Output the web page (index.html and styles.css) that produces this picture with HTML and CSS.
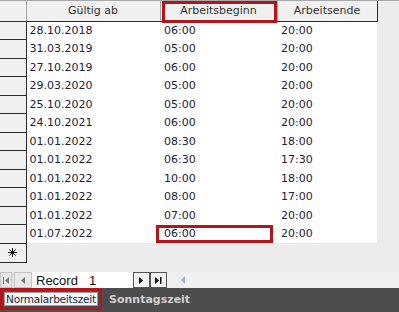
FILE: index.html
```html
<!DOCTYPE html>
<html lang="de">
  <head>
    <meta charset="UTF-8" />
    <title>Arbeitszeiten</title>
    <link rel="stylesheet" href="styles.css">
  </head>
  <body>
    <div class="sheet">
      <table class="grid">
        <thead>
          <tr>
            <th class="selector"></th>
            <th class="col-date">Gültig ab</th>
            <th class="col-time marked">Arbeitsbeginn</th>
            <th class="col-end">Arbeitsende</th>
          </tr>
        </thead>
        <tbody>
          <tr><td class="selector"></td><td>28.10.2018</td><td>06:00</td><td>20:00</td></tr>
          <tr><td class="selector"></td><td>31.03.2019</td><td>05:00</td><td>20:00</td></tr>
          <tr><td class="selector"></td><td>27.10.2019</td><td>06:00</td><td>20:00</td></tr>
          <tr><td class="selector"></td><td>29.03.2020</td><td>05:00</td><td>20:00</td></tr>
          <tr><td class="selector"></td><td>25.10.2020</td><td>05:00</td><td>20:00</td></tr>
          <tr><td class="selector"></td><td>24.10.2021</td><td>06:00</td><td>20:00</td></tr>
          <tr><td class="selector"></td><td>01.01.2022</td><td>08:30</td><td>18:00</td></tr>
          <tr><td class="selector"></td><td>01.01.2022</td><td>06:30</td><td>17:30</td></tr>
          <tr><td class="selector"></td><td>01.01.2022</td><td>10:00</td><td>18:00</td></tr>
          <tr><td class="selector"></td><td>01.01.2022</td><td>08:00</td><td>17:00</td></tr>
          <tr><td class="selector"></td><td>01.01.2022</td><td>07:00</td><td>20:00</td></tr>
          <tr><td class="selector"></td><td>01.07.2022</td><td class="marked-cell">06:00</td><td>20:00</td></tr>
          <tr class="new-row">
            <td class="selector">
              <svg width="9" height="9" viewBox="0 0 9 9" stroke="#111" stroke-width="1">
                <path d="M4.5 0V9M0 4.5H9M1.3 1.3L7.7 7.7M7.7 1.3L1.3 7.7"/>
              </svg>
            </td>
            <td colspan="3"></td>
          </tr>
        </tbody>
      </table>
    </div>

    <div class="navbar">
      <button class="nav-btn">
        <svg width="7" height="7" viewBox="0 0 7 7"><rect x="0" y="0" width="1" height="7" fill="#777"/><path d="M6 0L2 3.5L6 7Z" fill="#777"/></svg>
      </button>
      <button class="nav-btn wide">
        <svg width="5" height="7" viewBox="0 0 5 7"><path d="M4 0L0 3.5L4 7Z" fill="#777"/></svg>
      </button>
      <div class="record">
        <span class="record-label">Record</span>
        <span class="record-num">1</span>
      </div>
      <button class="nav-btn dark">
        <svg width="5" height="7" viewBox="0 0 5 7"><path d="M0 0L4 3.5L0 7Z" fill="#111"/></svg>
      </button>
      <button class="nav-btn dark">
        <svg width="7" height="7" viewBox="0 0 7 7"><path d="M0 0L4 3.5L0 7Z" fill="#111"/><rect x="5" y="0" width="1.5" height="7" fill="#111"/></svg>
      </button>
      <div class="hscroll">
        <svg width="5" height="8" viewBox="0 0 5 8"><path d="M4 0L0 4L4 8Z" fill="#9fb4d4"/></svg>
      </div>
    </div>

    <div class="tabs">
      <div class="tab active"><span>Normalarbeitszeit</span></div>
      <div class="tab">Sonntagszeit</div>
    </div>
  </body>
</html>
```

FILE: styles.css
```css
:root {
  --panel: #ececec;
  --cell-head: #f0f0f0;
  --line-dark: #2b2b2b;
  --line-light: #a8a8a8;
  --text: #22223a;
  --mark: #b3151b;
}

* {
  margin: 0;
  padding: 0;
  box-sizing: border-box;
}

body {
  width: 399px;
  height: 312px;
  overflow: hidden;
  background-color: var(--panel);
  font-family: "DejaVu Sans", Verdana, sans-serif;
  font-size: 11px;
  color: var(--text);
  display: flex;
  flex-direction: column;
}

.sheet {
  border-top: 1px solid var(--line-light);
  height: 274px;
}

.grid {
  border-collapse: collapse;
  table-layout: fixed;
  width: 377px;
}

.grid th {
  height: 20px;
  background-color: var(--cell-head);
  font-weight: normal;
  color: #333;
  text-align: center;
  border-bottom: 1px solid var(--line-dark);
  border-left: 1px solid var(--line-light);
}

.grid th:last-child {
  border-right: 1px solid var(--line-dark);
}

.grid th.selector {
  width: 26px;
  border-left: none;
  border-right: 1px solid var(--line-light);
}

.col-date {
  width: 134px;
}

.col-time {
  width: 117px;
}

.col-end {
  width: 100px;
}

.grid td {
  height: 18.5px;
  background-color: white;
  padding: 0 4px;
  white-space: nowrap;
}

.grid td:nth-child(2) {
  padding-left: 3px;
}

.grid td.selector {
  background-color: var(--cell-head);
  border-bottom: 1px solid var(--line-dark);
  border-right: 1px solid var(--line-dark);
  padding: 0;
  text-align: center;
  line-height: 0;
}

.new-row td {
  height: 19px;
  background-color: var(--panel);
}

.marked {
  position: relative;
}

.marked::after {
  content: "";
  position: absolute;
  left: 1px;
  top: 0;
  right: 0;
  bottom: -2px;
  border: 3px solid var(--mark);
}

.marked-cell {
  position: relative;
}

.marked-cell::after {
  content: "";
  position: absolute;
  left: -4px;
  top: 0;
  width: 111px;
  bottom: 0;
  border: 3px solid var(--mark);
}

/* Record navigation */
.navbar {
  height: 16px;
  display: flex;
  align-items: stretch;
  background-color: #e4e4e4;
}

.nav-btn {
  width: 12px;
  border: 1px solid #c4c4c4;
  background-color: #e8e8e8;
  display: flex;
  align-items: center;
  justify-content: center;
}

.nav-btn.wide {
  width: 18px;
  margin-left: 2px;
}

.nav-btn.dark {
  width: 17px;
  border: 1px solid #555;
  background-color: #f4f4f4;
}

.record {
  width: 101px;
  background-color: white;
  display: flex;
  align-items: center;
  color: #111;
  padding-left: 4px;
  font-family: "Liberation Sans", Arial, sans-serif;
  font-size: 13px;
}

.record-num {
  margin-left: 11px;
}

.hscroll {
  flex: 1;
  display: flex;
  align-items: center;
  padding-left: 14px;
  background-color: #f0f0f0;
}

/* Sheet tabs */
.tabs {
  flex: 1;
  display: flex;
  align-items: stretch;
  background-color: #4d4d4d;
  padding-bottom: 2px;
}

.tab {
  display: flex;
  align-items: center;
  padding: 0 4px;
  font-weight: bold;
  color: #d0d0d0;
  font-size: 11px;
}

.tab.active {
  border: 3px solid var(--mark);
  background-color: #4d4d4d;
  padding: 1px;
  margin-right: 3px;
}

.tab.active span {
  height: 100%;
  display: flex;
  align-items: center;
  padding: 0 1px;
  background-color: #f6f6f6;
  border: 1px solid #9a9a9a;
  color: #1e1e3c;
  font-weight: normal;
  font-size: 10.5px;
  letter-spacing: -0.2px;
}
```
